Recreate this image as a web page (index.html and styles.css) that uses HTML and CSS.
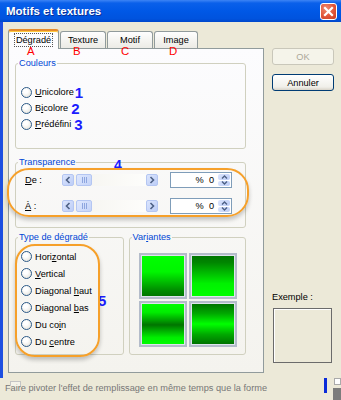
FILE: index.html
```html
<!DOCTYPE html>
<html lang="fr">
<head>
    <meta charset="UTF-8">
    <title>Motifs et textures</title>
    <link rel="stylesheet" href="styles.css">
</head>
<body>
    <div class="titlebar">
        <span class="title">Motifs et textures</span>
        <span class="close-btn">
            <svg width="11" height="11" viewBox="0 0 11 11"><path d="M2 2 L9 9 M9 2 L2 9" stroke="#fff" stroke-width="2.2" stroke-linecap="square"/></svg>
        </span>
    </div>

    <div class="frame">
        <div class="tabctl">
            <div class="tabs">
                <div class="tab tab-active"><span class="focus">Dégradé</span></div>
                <div class="tab tab-texture">Texture</div>
                <div class="tab tab-motif">Motif</div>
                <div class="tab tab-image">Image</div>
            </div>

            <div class="panel">
                <span class="mark mark-a">A</span>
                <span class="mark mark-b">B</span>
                <span class="mark mark-c">C</span>
                <span class="mark mark-d">D</span>

                <fieldset class="group colors">
                    <legend>Couleurs</legend>
                    <div class="options">
                        <div class="option"><span class="radio"></span><span><u>U</u>nicolore</span><span class="num">1</span></div>
                        <div class="option"><span class="radio"></span><span>B<u>i</u>colore</span><span class="num num-gap">2</span></div>
                        <div class="option"><span class="radio"></span><span><u>P</u>rédéfini</span><span class="num num-gap">3</span></div>
                    </div>
                </fieldset>

                <fieldset class="group transp">
                    <legend>Transparence</legend>
                    <div class="rows">
                        <div class="trow">
                            <span class="tlabel"><u>D</u>e :</span>
                            <div class="scrollbar">
                                <span class="sb-btn"><svg width="8" height="8" viewBox="0 0 8 8"><path d="M5.5 1 L2.5 4 L5.5 7" fill="none" stroke="#4d6185" stroke-width="1.6"/></svg></span>
                                <span class="sb-track"><span class="sb-thumb"><svg width="7" height="6" viewBox="0 0 7 6"><path d="M1.5 0 V6 M3.5 0 V6 M5.5 0 V6" stroke="#8ea6df" stroke-width="1"/></svg></span></span>
                                <span class="sb-btn"><svg width="8" height="8" viewBox="0 0 8 8"><path d="M2.5 1 L5.5 4 L2.5 7" fill="none" stroke="#4d6185" stroke-width="1.6"/></svg></span>
                            </div>
                            <div class="spin">
                                <span class="spin-value">%&nbsp; 0</span>
                                <span class="spin-btns">
                                    <span class="spin-btn"><svg width="7" height="4" viewBox="0 0 7 4"><path d="M1 3.5 L3.5 1 L6 3.5" fill="none" stroke="#4d6185" stroke-width="1.4"/></svg></span>
                                    <span class="spin-btn"><svg width="7" height="4" viewBox="0 0 7 4"><path d="M1 0.5 L3.5 3 L6 0.5" fill="none" stroke="#4d6185" stroke-width="1.4"/></svg></span>
                                </span>
                            </div>
                        </div>
                        <div class="trow">
                            <span class="tlabel"><u>À</u> :</span>
                            <div class="scrollbar">
                                <span class="sb-btn"><svg width="8" height="8" viewBox="0 0 8 8"><path d="M5.5 1 L2.5 4 L5.5 7" fill="none" stroke="#4d6185" stroke-width="1.6"/></svg></span>
                                <span class="sb-track"><span class="sb-thumb"><svg width="7" height="6" viewBox="0 0 7 6"><path d="M1.5 0 V6 M3.5 0 V6 M5.5 0 V6" stroke="#8ea6df" stroke-width="1"/></svg></span></span>
                                <span class="sb-btn"><svg width="8" height="8" viewBox="0 0 8 8"><path d="M2.5 1 L5.5 4 L2.5 7" fill="none" stroke="#4d6185" stroke-width="1.6"/></svg></span>
                            </div>
                            <div class="spin">
                                <span class="spin-value">%&nbsp; 0</span>
                                <span class="spin-btns">
                                    <span class="spin-btn"><svg width="7" height="4" viewBox="0 0 7 4"><path d="M1 3.5 L3.5 1 L6 3.5" fill="none" stroke="#4d6185" stroke-width="1.4"/></svg></span>
                                    <span class="spin-btn"><svg width="7" height="4" viewBox="0 0 7 4"><path d="M1 0.5 L3.5 3 L6 0.5" fill="none" stroke="#4d6185" stroke-width="1.4"/></svg></span>
                                </span>
                            </div>
                        </div>
                    </div>
                </fieldset>

                <div class="lower">
                    <fieldset class="group type">
                        <legend>Type de dégradé</legend>
                        <div class="options">
                            <div class="option"><span class="radio"></span><span>Hori<u>z</u>ontal</span></div>
                            <div class="option"><span class="radio"></span><span><u>V</u>ertical</span></div>
                            <div class="option"><span class="radio"></span><span>Diagonal <u>h</u>aut</span></div>
                            <div class="option"><span class="radio"></span><span>Diagonal <u>b</u>as</span></div>
                            <div class="option"><span class="radio"></span><span>Du co<u>i</u>n</span></div>
                            <div class="option"><span class="radio"></span><span>Du <u>c</u>entre</span></div>
                        </div>
                    </fieldset>
                    <fieldset class="group variants">
                        <legend>Var<u>i</u>antes</legend>
                        <div class="swatches">
                            <span class="swatch swatch-1"></span>
                            <span class="swatch swatch-2"></span>
                            <span class="swatch swatch-3"></span>
                            <span class="swatch swatch-4"></span>
                        </div>
                    </fieldset>
                </div>

                <span class="num num-4">4</span>
                <span class="num num-5">5</span>
                <span class="halo halo-transp"></span>
                <span class="halo halo-type"></span>
            </div>
        </div>

        <div class="side">
            <div class="btn btn-disabled">OK</div>
            <div class="btn btn-cancel">Annuler</div>
            <div class="example-label">Exemple :</div>
            <div class="example-box"></div>
        </div>
    </div>

    <div class="footer">
        <span class="footer-text">Faire pivoter l'effet de remplissage en même temps que la forme</span>
        <span class="footer-check"></span>
        <div class="footer-bits">
            <span class="blue-bar"></span>
            <div class="bits-col">
                <span class="white-box"></span>
                <span class="gray-block"></span>
            </div>
        </div>
    </div>
</body>
</html>
```

FILE: styles.css
```css
* { margin: 0; padding: 0; box-sizing: border-box; }
body { width: 341px; height: 400px; overflow: hidden; background: #ece9d8; font-family: 'Liberation Sans', Arial, sans-serif; font-size: 9.2px; color: #000; }

/* title bar */
.titlebar { height: 22px; display: flex; align-items: center; justify-content: space-between; padding: 0 4px 0 6px; background: linear-gradient(#3d84f5 0%, #0a60ea 14%, #0058e6 50%, #0053de 85%, #0047cb 100%); }
.title { color: #fff; font-weight: bold; font-size: 11.5px; text-shadow: 1px 1px 0 #0b2f94; }
.close-btn { width: 17px; height: 17px; border: 1px solid #fff; border-radius: 3px; background: radial-gradient(circle at 35% 30%, #f08a6e 0%, #e0553a 55%, #c83c22 100%); display: flex; align-items: center; justify-content: center; }

/* frame */
.frame { display: flex; height: 356px; border-left: 3px solid #1d4fe0; padding: 7px 0 0 5px; }
.tabctl { width: 256px; }
.tabs { display: flex; align-items: flex-end; gap: 1px; height: 19px; }
.tab { height: 17px; border: 1px solid #919b9c; border-bottom: none; border-radius: 3px 3px 0 0; background: linear-gradient(#fefefe, #ecebe5); display: flex; align-items: center; justify-content: center; }
.tab-active { width: 51px; height: 20px; margin-bottom: -1px; position: relative; z-index: 1; background: #fcfcfe; border-top: 2px solid #e68b2c; box-shadow: inset 0 1px 0 #ffc83c; }
.tab-texture { width: 46px; }
.tab-motif { width: 46px; }
.tab-image { width: 44px; }
.focus { border: 1px dotted #555; padding: 1px 1px; line-height: 10px; }

.panel { position: relative; height: 325px; border: 1px solid #919b9c; background: linear-gradient(#fcfcfe, #f4f3ee); padding: 8px 17px 0 6px; }

/* group boxes */
.group { border: 1px solid #d0d0bf; border-radius: 3px; }
.group legend { color: #0046d5; margin-left: 2px; padding: 0 1px; line-height: 12px; }
.options { display: flex; flex-direction: column; }
.option { display: flex; align-items: center; height: 16px; gap: 3px; }
.radio { flex: none; width: 11px; height: 11px; border-radius: 50%; border: 1px solid #2c5a88; background: radial-gradient(circle at 40% 35%, #fff 25%, #dedcd2 100%); }

.colors .options { padding: 15px 0 16px 5px; }
.num { color: #1c1cff; font-weight: bold; font-size: 15px; line-height: 1; font-family: 'Liberation Sans', Arial, sans-serif; margin-left: -2px; }
.num-gap { margin-left: 0; }

.transp { margin-top: 7px; }
.rows { display: flex; flex-direction: column; gap: 10px; padding: 4px 0 13px 9px; }
.trow { display: flex; align-items: center; height: 16px; }
.tlabel { width: 37px; }
.scrollbar { display: flex; width: 96px; height: 12px; }
.sb-btn { flex: none; width: 12px; height: 12px; border: 1px solid #b4c6f2; border-radius: 2px; background: linear-gradient(135deg, #dbe5fd, #bccdf7); display: flex; align-items: center; justify-content: center; }
.sb-track { flex: 1; display: flex; align-items: center; background: linear-gradient(90deg, #f5f4ef, #fdfdfb); }
.sb-thumb { margin-left: 2px; width: 16px; height: 12px; border: 1px solid #b4c6f2; border-radius: 2px; background: linear-gradient(135deg, #dfe8fe, #c4d3f8); display: flex; align-items: center; justify-content: center; }
.spin { display: flex; margin-left: 12px; width: 62px; height: 16px; border: 1px solid #7f9db9; background: #fff; }
.spin-value { flex: 1; text-align: right; padding-right: 3px; line-height: 14px; }
.spin-btns { width: 14px; display: flex; flex-direction: column; padding: 1px; gap: 1px; }
.spin-btn { flex: 1; border-radius: 2px; background: linear-gradient(135deg, #dbe5fd, #bccdf7); display: flex; align-items: center; justify-content: center; }

.lower { display: flex; gap: 5px; margin-top: 3px; }
.type { width: 109px; height: 124px; }
.type .options { padding: 5px 0 0 5px; }
.type .option { height: 17px; }
.variants { width: 118px; height: 124px; }
.swatches { display: grid; grid-template-columns: 48px 48px; grid-auto-rows: 46px; gap: 2px; padding: 10px 0 0 9px; }
.swatch { border: 2px solid #b4bcca; box-shadow: inset 0 0 0 1px #dfe4ee; }
.swatch-1 { background: linear-gradient(#00ff00 0%, #00f600 40%, #008a00 85%, #007400 100%); }
.swatch-2 { background: linear-gradient(#007400 0%, #008600 18%, #00f200 68%, #00ff00 100%); }
.swatch-3 { background: linear-gradient(#00ff00 0%, #00ee00 22%, #007400 52%, #00ee00 82%, #00ff00 100%); }
.swatch-4 { background: linear-gradient(#006e00 0%, #00a800 25%, #00ff00 50%, #00a800 75%, #006e00 100%); }

/* annotations drawn over the dialog */
.mark { position: absolute; z-index: 2; top: -1.6px; color: #ff0000; font-size: 11.4px; line-height: 8px; }
.mark-a { left: 18px; }
.mark-b { left: 64px; }
.mark-c { left: 112px; }
.mark-d { left: 160px; }
.num-4 { position: absolute; left: 105px; top: 109px; font-size: 14px; margin: 0; }
.num-5 { position: absolute; left: 89px; top: 244px; margin: 0; }
.halo { position: absolute; border: 2px solid #f6a02a; box-shadow: 0 3px 4px rgba(0, 0, 0, 0.22); pointer-events: none; }
.halo-transp { left: -2px; top: 119px; width: 242px; height: 49px; border-radius: 22px; }
.halo-type { left: 6px; top: 195px; width: 85px; height: 113px; border-radius: 20px; }

/* right column */
.side { width: 62px; margin-left: 8px; margin-top: 19px; display: flex; flex-direction: column; }
.btn { height: 17px; border: 1px solid #003c74; border-radius: 3px; background: linear-gradient(#ffffff, #f0efe9 80%, #d8d3c8); display: flex; align-items: center; justify-content: center; }
.btn-disabled { border-color: #c9c7ba; color: #aca899; background: #f5f4ea; }
.btn-cancel { margin-top: 9px; }
.example-label { margin-top: 200px; line-height: 12px; }
.example-box { margin: 5px 0 0 1px; width: 59px; height: 55px; border: 1px solid #6b6b6b; box-shadow: inset 1px 1px 0 #fff; }

/* footer */
.footer { position: relative; display: flex; height: 22px; }
.footer-text { padding-left: 5px; line-height: 20px; color: #777; white-space: nowrap; }
.footer-check { position: absolute; left: 10px; top: 3px; width: 11px; height: 5px; border: 1px solid #c4c4c4; border-bottom: none; background: rgba(255, 255, 255, 0.45); }
.footer-bits { margin-left: auto; display: flex; }
.blue-bar { width: 3px; height: 15px; background: #0a2bd9; margin-right: 6px; }
.bits-col { width: 8px; display: flex; flex-direction: column; }
.white-box { margin-left: 1px; width: 7px; height: 7px; border: 1px solid #aaa; background: #fff; }
.gray-block { margin-top: 3px; height: 12px; background: #7c7c7c; }
```
